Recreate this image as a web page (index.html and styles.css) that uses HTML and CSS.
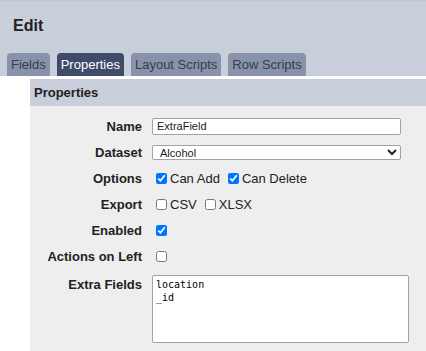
FILE: index.html
```html
<!DOCTYPE html>
<html lang="en">
<head>
    <meta charset="UTF-8">
    <title>Edit</title>
    <link rel="stylesheet" href="styles.css">
</head>
<body>
    <!-- Title and tab strip -->
    <div class="header">
        <h2 class="title">Edit</h2>
        <div class="tabs">
            <span class="tab">Fields</span>
            <span class="tab tab-active">Properties</span>
            <span class="tab">Layout Scripts</span>
            <span class="tab">Row Scripts</span>
        </div>
    </div>

    <!-- Properties panel -->
    <div class="panel">
        <div class="panel-title">Properties</div>
        <div class="form">
            <label class="form-label">Name</label>
            <div class="form-field"><input class="text-input" type="text" value="ExtraField"></div>

            <label class="form-label">Dataset</label>
            <div class="form-field">
                <select class="select-input">
                    <option>Alcohol</option>
                </select>
            </div>

            <label class="form-label">Options</label>
            <div class="form-field">
                <label class="check"><input type="checkbox" checked>Can Add</label>
                <label class="check"><input type="checkbox" checked>Can Delete</label>
            </div>

            <label class="form-label">Export</label>
            <div class="form-field">
                <label class="check"><input type="checkbox">CSV</label>
                <label class="check"><input type="checkbox">XLSX</label>
            </div>

            <label class="form-label">Enabled</label>
            <div class="form-field"><input type="checkbox" checked></div>

            <label class="form-label">Actions on Left</label>
            <div class="form-field"><input type="checkbox"></div>

            <label class="form-label form-label-top">Extra Fields</label>
            <div class="form-field form-field-top">
                <textarea class="area-input">location
_id</textarea>
            </div>
        </div>
    </div>
</body>
</html>
```

FILE: styles.css
```css
body {
    margin: 0;
    font-family: "Liberation Sans", Arial, sans-serif;
    font-size: 13px;
    color: #222;
    background-color: white;
}
.header {
    background-color: #c9cedb;
    border-top: 1px solid #c2c6cf;
    height: 75px;
    display: flex;
    flex-direction: column;
    justify-content: space-between;
}
.title {
    margin: 16px 0 0 13px;
    font-size: 16px;
    line-height: 18px;
    font-weight: bold;
    color: #222;
}
.tabs {
    display: flex;
    gap: 7px;
    padding-left: 7px;
}
.tab {
    height: 23px;
    line-height: 23px;
    padding: 0 4px;
    background-color: #8893ab;
    color: #373d4b;
    border-radius: 4px 4px 0 0;
}
.tab-active {
    background-color: #3f4b69;
    color: white;
}
.panel {
    margin: 3px 0 0 30px;
    background-color: #eeeeee;
}
.panel-title {
    height: 27px;
    line-height: 27px;
    padding-left: 4px;
    font-weight: bold;
    background-color: #c9cedb;
}
.form {
    display: grid;
    grid-template-columns: 112px 1fr;
    grid-auto-rows: 26px;
    column-gap: 10px;
    padding: 7px 0 7px 0;
}
.form-label {
    display: flex;
    align-items: center;
    justify-content: flex-end;
    font-weight: bold;
}
.form-field {
    display: flex;
    align-items: center;
}
.form-label-top, .form-field-top {
    align-items: flex-start;
    height: auto;
}
.form-label-top {
    padding-top: 8px;
}
.form-field-top {
    padding-top: 6px;
    grid-row: span 3;
}
.text-input, .select-input {
    box-sizing: border-box;
    width: 249px;
    font-family: "Liberation Sans", Arial, sans-serif;
    font-size: 11px;
    color: #222;
    border: 1px solid #a3a3a3;
    border-radius: 2px;
    background-color: white;
    margin: 0;
}
.text-input {
    height: 17px;
    padding: 0 4px;
}
.select-input {
    height: 15px;
    padding: 0 0 0 3px;
}
input[type="checkbox"] {
    width: 11px;
    height: 11px;
    margin: 3px 3px 3px 4px;
}
.check {
    display: flex;
    align-items: center;
    margin-right: 4px;
}
.area-input {
    box-sizing: border-box;
    width: 257px;
    height: 68px;
    margin: 0;
    padding: 2px 3px;
    font-family: "DejaVu Sans Mono", monospace;
    font-size: 10px;
    line-height: 13px;
    border: 1px solid #a3a3a3;
    border-radius: 2px;
    resize: none;
}
```
